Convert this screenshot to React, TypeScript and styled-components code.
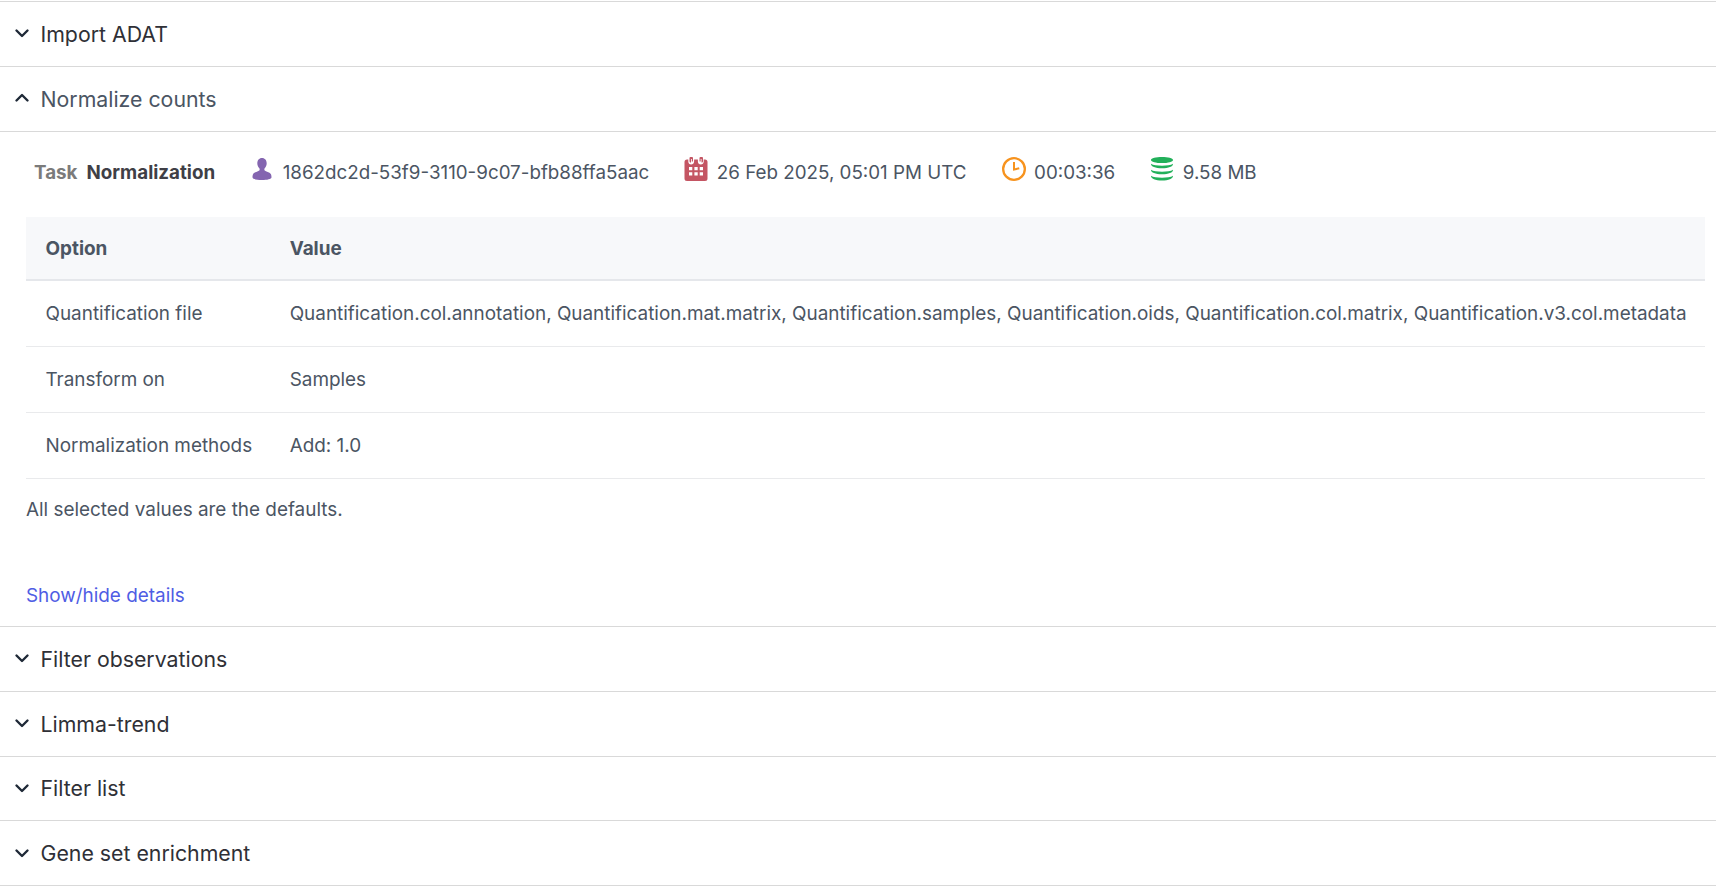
import React from "react";
import styled, { createGlobalStyle, css } from "styled-components";

const Global = createGlobalStyle`
  html, body { margin: 0; padding: 0; background: #fff; }
  body { font-family: Inter, "Liberation Sans", sans-serif; font-size: 18.9px; color: #4b5563; }
`;

const Page = styled.div`
  padding-top: 1px;
  width: 1716px;
`;

const Section = styled.section`
  border-top: 1px solid #d9d9d9;
  &:last-child { border-bottom: 1px solid #d9d9d9; }
`;

const Header = styled.div<{ $open?: boolean }>`
  height: 63.8px;
  display: flex;
  align-items: center;
  padding-left: 14px;
  gap: 10.5px;
  font-size: 21.3px;
  color: ${(p) => (p.$open ? "#4b5563" : "#2f3036")};
`;

const Chevron = styled.svg`
  width: 16px;
  height: 16px;
  fill: none;
  stroke: #1f2937;
  stroke-width: 2.4;
  stroke-linecap: round;
  stroke-linejoin: round;
  margin-top: -1px;
`;

const Body = styled.div`
  border-top: 1px solid #d9d9d9;
  padding: 0 11px 0 26px;
  height: 495.4px;
  box-sizing: border-box;
`;

const Meta = styled.div`
  height: 85px;
  box-sizing: border-box;
  padding: 0 0 3px 8px;
  display: flex;
  align-items: center;
  font-size: 18.8px;
`;

const MetaLabel = styled.span`
  font-weight: 700;
  color: #7b7b7b;
  margin-right: 9px;
`;

const MetaTitle = styled.span`
  font-weight: 700;
  color: #3f3f46;
  margin-right: 35px;
`;

const MetaItem = styled.span`
  display: flex;
  align-items: center;
  gap: 8.5px;
  margin-right: 35px;
`;

const MetaIcon = styled.svg<{ $color: string }>`
  width: 24px;
  height: 24px;
  fill: ${(p) => p.$color};
  flex: none;
  margin-top: -7px;
`;

const Table = styled.table`
  width: 100%;
  border-collapse: separate;
  border-spacing: 0;
`;

const cellPadding = css`
  padding-left: 19px;
  padding-right: 19px;
  &:first-child { padding-left: 19.5px; padding-right: 18.5px; }
  &:last-child { padding-right: 17px; }
`;

const Th = styled.th`
  ${cellPadding}
  background: #f7f8fa;
  text-align: left;
  font-weight: 700;
  color: #4b5563;
  height: 64px;
  padding-top: 2px;
  padding-bottom: 0;
  border-bottom: 2px solid #e5e7eb;
  box-sizing: border-box;
`;

const Td = styled.td`
  ${cellPadding}
  height: 66px;
  padding-top: 0;
  padding-bottom: 0;
  white-space: nowrap;
  border-bottom: 1px solid #e9eaec;
  box-sizing: border-box;
`;

const NameTd = styled(Td)`
  width: 1px;
`;

const Note = styled.p`
  margin: 18px 0 0;
  line-height: 26px;
  color: #4b5563;
`;

const DetailsLink = styled.a`
  display: block;
  margin-top: 60px;
  line-height: 26px;
  color: #4f5de4;
`;

const Down = () => (
  <Chevron viewBox="0 0 16 16"><path d="M2.500 5.500 8 11l5.500-5.500" /></Chevron>
);
const Up = () => (
  <Chevron viewBox="0 0 16 16"><path d="M2.500 10.500 8 5l5.500 5.500" /></Chevron>
);

const rows = [
  ["Quantification file", "Quantification.col.annotation, Quantification.mat.matrix, Quantification.samples, Quantification.oids, Quantification.col.matrix, Quantification.v3.col.metadata"],
  ["Transform on", "Samples"],
  ["Normalization methods", "Add: 1.0"],
];

const Collapsed = ({ title }: { title: string }) => (
  <Section>
    <Header><Down />{title}</Header>
  </Section>
);

export default function App() {
  return (
    <Page>
      <Global />
      <Collapsed title="Import ADAT" />
      <Section>
        <Header $open><Up />Normalize counts</Header>
        <Body>
          <Meta>
            <MetaLabel>Task</MetaLabel>
            <MetaTitle>Normalization</MetaTitle>
            <MetaItem>
              <MetaIcon $color="#8465b0" viewBox="0 0 24 24">
                <path d="M12 1c-3 0-4.700 2.400-4.700 5.300 0 2 .8 3.800 2 5 .5.600.5 1.600 0 2.200-1 .9-5 1.800-6.100 3.500-.6 1-.7 2.400-.7 3.300C2.500 22.300 7 23 12 23s9.500-.7 9.500-2.700c0-.9-.1-2.300-.7-3.300-1.100-1.700-5.100-2.600-6.100-3.500-.5-.6-.5-1.600 0-2.200 1.200-1.200 2-3 2-5C16.700 3.400 15 1 12 1z" />
              </MetaIcon>
              1862dc2d-53f9-3110-9c07-bfb88ffa5aac
            </MetaItem>
            <MetaItem>
              <MetaIcon $color="#c45563" viewBox="0 0 24 24">
                <path fillRule="evenodd" d="M6.500 0h1.500a1 1 0 0 1 1 1v3.500H7.800V2h-.8v3.500C6 5.500 5.500 5 5.500 4V1a1 1 0 0 1 1-1zm10 0H18a1 1 0 0 1 1 1v3c0 1-.5 1.500-1.500 1.500V2h-.8v2.500h-1.200V1a1 1 0 0 1 1-1zM3 2.500h1.300V4.500c0 1.800 1.200 3 2.800 3s3-1.200 3-3v-2h3.800v2c0 1.800 1.200 3 2.900 3s2.900-1.200 2.900-3v-2H21A2.500 2.500 0 0 1 23.500 5v16.500A2.500 2.500 0 0 1 21 24H3a2.500 2.500 0 0 1-2.500-2.500V5A2.500 2.500 0 0 1 3 2.500zM5 10v3.300h3.300V10H5zm5.400 0v3.300h3.300V10h-3.300zm5.300 0v3.300H19V10h-3.300zM5 15.300v3.300h3.300v-3.300H5zm5.400 0v3.300h3.300v-3.300h-3.300zm5.300 0v3.300H19v-3.300h-3.300z" />
              </MetaIcon>
              26 Feb 2025, 05:01 PM UTC
            </MetaItem>
            <MetaItem>
              <MetaIcon $color="#f7931e" viewBox="0 0 24 24">
                <path fillRule="evenodd" d="M12 0a12 12 0 1 1 0 24 12 12 0 0 1 0-24zm0 2.300a9.700 9.700 0 1 0 0 19.400 9.700 9.700 0 0 0 0-19.400zM11 5h2v6.300l4-1 .5 2-6.500 1.500V5z" />
              </MetaIcon>
              00:03:36
            </MetaItem>
            <MetaItem>
              <MetaIcon $color="#22b05a" viewBox="0 0 24 24">
                <path d="M12 0c6 0 11 1 11 2.900S18 6 12 6 1 4.800 1 2.900 6 0 12 0zM1 6.800C3 8.300 7.500 8.700 12 8.700s9-.4 11-1.900c.2 2.900-4.500 4.500-11 4.500S.8 9.700 1 6.800zm0 6C3 14.300 7.500 14.700 12 14.700s9-.4 11-1.900c.2 2.900-4.500 4.500-11 4.500s-11.200-1.600-11-4.500zm0 6C3 20.300 7.500 20.700 12 20.700s9-.4 11-1.900c.2 2.900-4.500 4.800-11 4.800S.8 21.700 1 18.800z" />
              </MetaIcon>
              9.58 MB
            </MetaItem>
          </Meta>
          <Table>
            <thead>
              <tr><Th>Option</Th><Th>Value</Th></tr>
            </thead>
            <tbody>
              {rows.map(([k, v]) => (
                <tr key={k}><NameTd>{k}</NameTd><Td>{v}</Td></tr>
              ))}
            </tbody>
          </Table>
          <Note>All selected values are the defaults.</Note>
          <DetailsLink>Show/hide details</DetailsLink>
        </Body>
      </Section>
      <Collapsed title="Filter observations" />
      <Collapsed title="Limma-trend" />
      <Collapsed title="Filter list" />
      <Collapsed title="Gene set enrichment" />
    </Page>
  );
}
